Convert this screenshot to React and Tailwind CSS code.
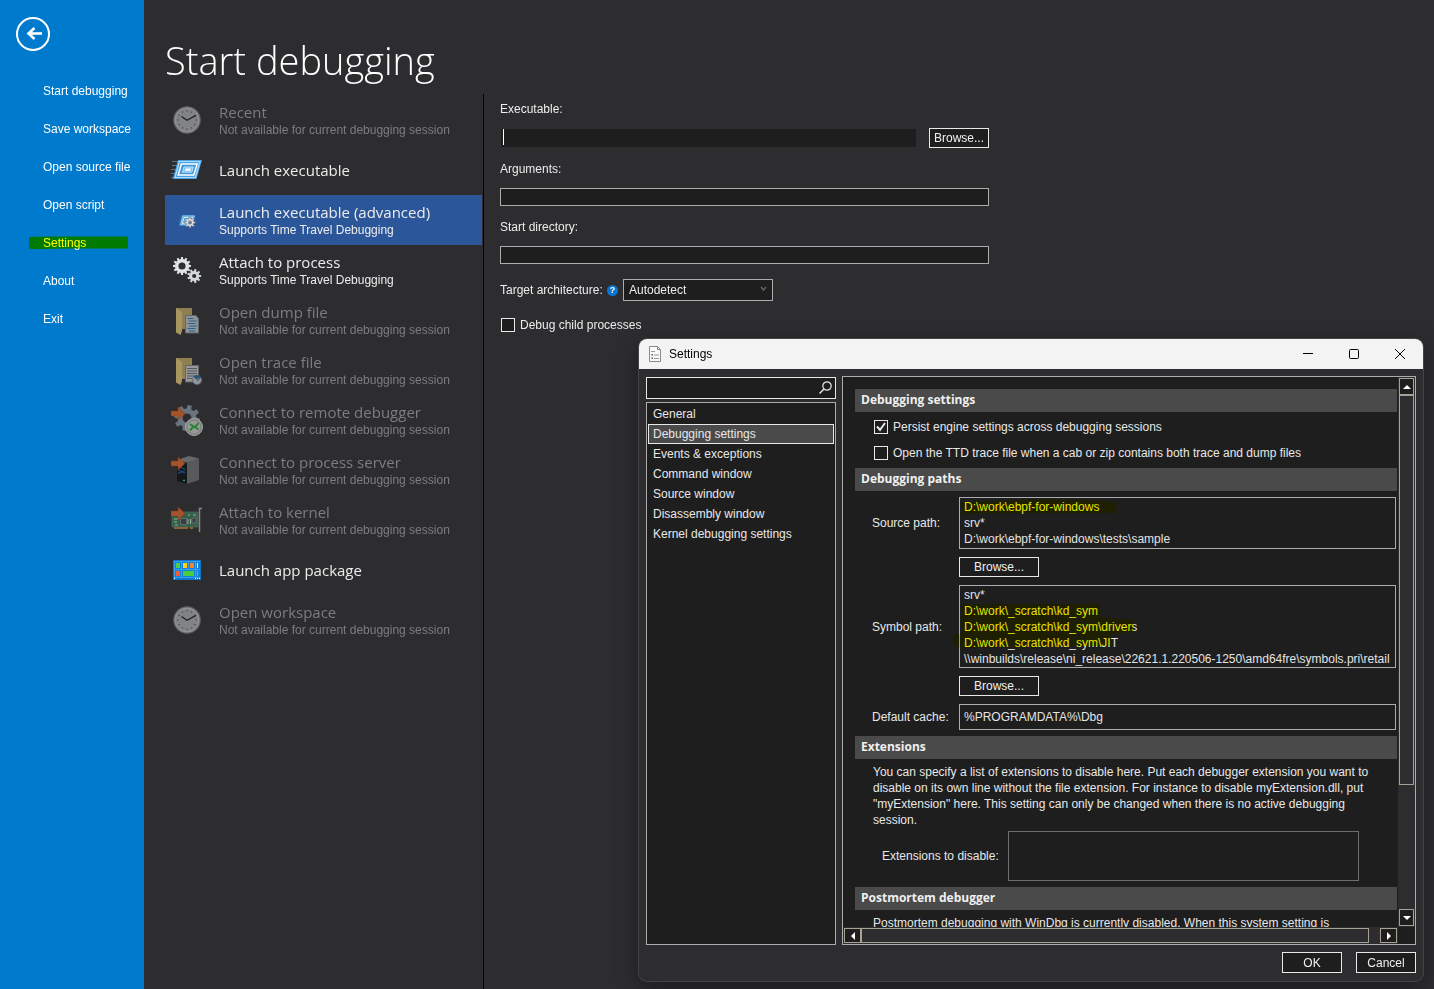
import { useState } from "react";

/* ---------- icons ---------- */

function gearPath(cx, cy, teeth, outer, inner) {
  const pts = [];
  const step = (Math.PI * 2) / teeth;
  for (let i = 0; i < teeth; i++) {
    const a = i * step;
    [
      [inner, -0.32],
      [outer, -0.2],
      [outer, 0.2],
      [inner, 0.32],
    ].forEach(([r, o]) => {
      const t = a + o * step;
      pts.push(`${(cx + r * Math.cos(t)).toFixed(2)} ${(cy + r * Math.sin(t)).toFixed(2)}`);
    });
  }
  return `M${pts.join("L")}Z`;
}

function ClockIcon() {
  const ticks = Array.from({ length: 12 }, (_, i) => i * 30);
  return (
    <svg width="32" height="32" viewBox="0 0 32 32" aria-hidden="true">
      <circle cx="16" cy="16" r="13.2" fill="#7a7b7d" stroke="#606163" strokeWidth="1.2" />
      <circle cx="16" cy="16" r="12" fill="#828385" stroke="#9a9b9d" strokeWidth="0.8" />
      {ticks.map((t) => (
        <path key={t} d="M16 6v1.8" stroke="#4d4e50" strokeWidth="0.9" transform={`rotate(${t} 16 16)`} />
      ))}
      <path d="M10.5 12.5L16 16.3L25 11.3" fill="none" stroke="#232325" strokeWidth="1.4" />
    </svg>
  );
}

function LaunchShape() {
  return (
    <>
      <path d="M1 7.500h6M1 11.500h5M0 15.500h5M0 19.500h4M0 23.500h3" stroke="#5d7385" strokeWidth="1.2" />
      <path d="M7 6h24l-5.5 19H1.8Z" fill="#4ba3e3" />
      <path d="M8.3 7.5h20.8l-4.7 16H4Z" fill="none" stroke="#a9dbff" strokeWidth="1.2" />
      <path d="M10.4 10h15.8l-3.4 11H7.2Z" fill="#3f97dc" stroke="#fff" strokeWidth="1.5" />
      <path d="M13 13h9.4l-1.6 5.2h-9.4Z" fill="#79c2f5" stroke="#d6efff" strokeWidth="0.8" />
      <path d="M14.6 14.4h5.4l-.8 2.4h-5.3Z" fill="#fff" />
    </>
  );
}

function LaunchIcon() {
  return (
    <svg width="32" height="32" viewBox="0 0 32 32" aria-hidden="true">
      <LaunchShape />
    </svg>
  );
}

function LaunchAdvancedIcon() {
  return (
    <svg width="32" height="32" viewBox="0 0 32 32" aria-hidden="true">
      <g transform="translate(7.5 8) scale(0.54)">
        <LaunchShape />
      </g>
      <path d={gearPath(19, 18.5, 8, 5.4, 3.8)} fill="#dcdee0" stroke="#5b646e" strokeWidth="0.6" />
      <circle cx="19" cy="18.500" r="1.6" fill="#6a86a4" stroke="#5b646e" strokeWidth="0.6" />
    </svg>
  );
}

function GearsIcon() {
  return (
    <svg width="32" height="32" viewBox="0 0 32 32" aria-hidden="true">
      <path d={gearPath(11, 12, 12, 9, 7)} fill="#dfe3e6" />
      <circle cx="11" cy="12" r="3.6" fill="#2d2d30" />
      <path d={gearPath(23.2, 22, 9, 7, 5)} fill="#d3d7da" />
      <circle cx="23.2" cy="22" r="2.1" fill="#2d2d30" />
    </svg>
  );
}

function FolderShape() {
  return (
    <>
      <path d="M5 4h16v21H8Z" fill="#8f7f52" />
      <path d="M5 4l6 4v19l-1.500 4L5 28.500Z" fill="#a8965f" />
    </>
  );
}

function DumpIcon() {
  return (
    <svg width="32" height="32" viewBox="0 0 32 32" aria-hidden="true">
      <FolderShape />
      <path d="M14.500 11.500H25l2.500 3V29h-13Z" fill="#909498" stroke="#616468" />
      <path d="M16.500 14.500h6M18 17h8M16.500 19.500h8M18 22h8M16.500 24.500h8M18 27h6" stroke="#2a6390" strokeWidth="1.1" />
    </svg>
  );
}

function TraceIcon() {
  return (
    <svg width="32" height="32" viewBox="0 0 32 32" aria-hidden="true">
      <FolderShape />
      <path d="M14.500 11.500h13V28h-13Z" fill="#96989a" stroke="#616468" />
      <path d="M16 14.500h10M16 17h10M16 19.500h10M16 22h8M16 24.500h5" stroke="#55585b" strokeWidth="1" />
      <circle cx="26" cy="26" r="4.600" fill="#8f969b" stroke="#5f6468" strokeWidth="0.8" />
      <path d="M22.500 23c1-2.500 5.500-3 7.500.5l-1.500 2l-1.500-2l-2 1.500Z" fill="#24587f" />
      <path d="M26 26v-2.500M26 26h2" stroke="#3a3d40" strokeWidth="0.9" />
    </svg>
  );
}

function ArrowShape() {
  return <path d="M0 7h7V3l7 6.500L7 16v-4H0Z" fill="#a4532a" stroke="#7f3f20" strokeWidth="0.5" />;
}

function RemoteIcon() {
  return (
    <svg width="32" height="32" viewBox="0 0 32 32" aria-hidden="true">
      <path d={gearPath(16, 14, 8, 13, 9.5)} fill="#6a7480" transform="rotate(12 16 14)" />
      <circle cx="16" cy="14" r="4.500" fill="#2d2d30" />
      <ArrowShape />
      <circle cx="23" cy="23" r="8.500" fill="#8b8e8b" stroke="#a3a5a3" strokeWidth="1" />
      <circle cx="23" cy="23" r="7" fill="#959895" stroke="#6b6e6b" strokeWidth="0.6" />
      <path d="M19 20l3.500 2.500l-3.500 4M27.500 19l-3.500 4l3.500 2.500" fill="none" stroke="#2a8236" strokeWidth="2" />
    </svg>
  );
}

function ServerIcon() {
  return (
    <svg width="32" height="32" viewBox="0 0 32 32" aria-hidden="true">
      <path d="M6 6l12-4l10 2.500l-12 4.500Z" fill="#66686b" />
      <path d="M6 6l10 3v21l-10-3Z" fill="#151719" />
      <path d="M16 9l12-4.500V26l-12 4Z" fill="#57595d" />
      <path d="M7 16l7 3M7 19.500l7-3M8 13l6 2" stroke="#1d4f86" strokeWidth="1.100" />
      <path d="M12 26.500h2" stroke="#2f9aa0" strokeWidth="1.500" />
      <ArrowShape />
    </svg>
  );
}

function KernelIcon() {
  return (
    <svg width="32" height="32" viewBox="0 0 32 32" aria-hidden="true">
      <path d="M1 8h26v15H1Z" fill="#355f49" stroke="#4d7a62" strokeWidth="0.6" />
      <path d="M3 23h14v2H3ZM19 23h3v2h-3Z" fill="#8a6336" />
      <path d="M9.500 14.500h6v6h-6ZM21 14h4v5h-4Z" fill="#3b3e40" stroke="#86898b" strokeWidth="0.500" />
      <path d="M3 15h4M3 18h3M4 21h3M17 11h2M22 11h3M17 15v5M19.500 15v5" stroke="#9db5a5" strokeWidth="0.900" />
      <path d="M31 4.500h-2.500V28" fill="none" stroke="#85888a" strokeWidth="1.500" />
      <ArrowShape />
    </svg>
  );
}

function PackageIcon() {
  return (
    <svg width="32" height="32" viewBox="0 0 32 32" shapeRendering="crispEdges" aria-hidden="true">
      <path d="M2 6h28v20H2Z" fill="#1075c8" />
      <path d="M3 7h26v17H3Z" fill="#36a0f5" />
      <path d="M4 8h6v7H4ZM11 8h6v7h-6ZM18 8h6v7h-6ZM25 8h4v7h-4ZM4 16h6v7H4ZM11 16h13v7H11ZM25 16h4v7h-4Z" fill="#1180d8" />
      <path d="M5 9h4v5H5Z" fill="#4fd04a" />
      <path d="M12 9h4v5h-4Z" fill="#ffd21c" />
      <path d="M19 9h4v5h-4Z" fill="#f5832a" />
      <path d="M26 9h1v5h-1Z" fill="#d7eeff" />
      <path d="M5 17h4v5H5Z" fill="#f25f3a" />
      <path d="M12 17h11v5H12Z" fill="#4ccb3f" />
      <path d="M26 17h1v5h-1Z" fill="#f5832a" />
      <path d="M3 24h1v1H3ZM24 24h1v1h-1ZM26 24h1v1h-1ZM28 24h1v1h-1Z" fill="#fff" />
    </svg>
  );
}

/* ---------- data ---------- */

const NAV = ["Start debugging", "Save workspace", "Open source file", "Open script", "Settings", "About", "Exit"];

const NA = "Not available for current debugging session";
const TTD = "Supports Time Travel Debugging";

const TARGETS = [
  { title: "Recent", note: NA, Icon: ClockIcon, off: true },
  { title: "Launch executable", Icon: LaunchIcon },
  { title: "Launch executable (advanced)", note: TTD, Icon: LaunchAdvancedIcon, active: true },
  { title: "Attach to process", note: TTD, Icon: GearsIcon },
  { title: "Open dump file", note: NA, Icon: DumpIcon, off: true },
  { title: "Open trace file", note: NA, Icon: TraceIcon, off: true },
  { title: "Connect to remote debugger", note: NA, Icon: RemoteIcon, off: true },
  { title: "Connect to process server", note: NA, Icon: ServerIcon, off: true },
  { title: "Attach to kernel", note: NA, Icon: KernelIcon, off: true },
  { title: "Launch app package", Icon: PackageIcon },
  { title: "Open workspace", note: NA, Icon: ClockIcon, off: true },
];

const CATEGORIES = [
  "General",
  "Debugging settings",
  "Events & exceptions",
  "Command window",
  "Source window",
  "Disassembly window",
  "Kernel debugging settings",
];

/* ---------- shared controls ---------- */

const HEADING_FONT = "font-['Open_Sans','Noto_Sans',sans-serif]";
const FIELD = "block w-full rounded-none border border-[#acacac] bg-[#1e1e1e] px-1 text-[#e4e4e4] outline-none";
const BUTTON = "flex items-center justify-center border border-[#e8e8e8] bg-[#1e1e1e] text-[#f0f0f0]";

function Check({ id, label, checked, onChange }) {
  return (
    <div className="flex h-4 items-center">
      <span className="relative flex">
        <input
          id={id}
          type="checkbox"
          checked={checked}
          onChange={onChange}
          className="size-3.5 appearance-none border border-[#e8e8e8] bg-[#1e1e1e]"
        />
        {checked && (
          <svg className="pointer-events-none absolute inset-0" width="14" height="14" viewBox="0 0 14 14" aria-hidden="true">
            <path d="M3 6.500L6 10L11 3" fill="none" stroke="#ececec" strokeWidth="2" />
          </svg>
        )}
      </span>
      <label htmlFor={id} className="pl-[5px] whitespace-nowrap">
        {label}
      </label>
    </div>
  );
}

function SectionTitle({ children }) {
  return (
    <h3 className={`h-[23px] bg-[#4a4a4a] pl-1.5 leading-[22px] font-bold text-[#f0f0f0] ${HEADING_FONT}`}>{children}</h3>
  );
}

function Triangle({ d }) {
  return (
    <svg width="8" height="8" viewBox="0 0 8 8" aria-hidden="true">
      <path d={d} fill="#fff" />
    </svg>
  );
}

const SCROLL_BUTTON = "flex shrink-0 items-center justify-center border border-[#a8a294] bg-[#1e1e1e]";

/* ---------- page parts ---------- */

function Sidebar() {
  return (
    <aside className="w-36 shrink-0 bg-[#007acc] text-white">
      <button type="button" aria-label="Back" className="mt-[17px] ml-4 block size-[34px]">
        <svg width="34" height="34" viewBox="0 0 34 34" fill="none" stroke="#fff" aria-hidden="true">
          <circle cx="17" cy="17" r="16" strokeWidth="2" />
          <path d="M12 16.500h14" strokeWidth="2.600" />
          <path d="M18.500 11L12.500 16.500L18.500 22" strokeWidth="2.600" />
        </svg>
      </button>
      <nav className="mt-[21px] flex flex-col">
        {NAV.map((item) => (
          <a key={item} href="#" className="relative flex h-[38px] items-center pl-[43px] whitespace-nowrap">
            {item}
            {item === "Settings" && (
              <svg
                className="absolute top-3 left-[29px] mix-blend-multiply"
                width="99"
                height="13"
                viewBox="0 0 99 13"
                aria-hidden="true"
              >
                <path d="M0 1L20 .5H99V12.500H40L12 13H0Z" fill="#ff0" />
              </svg>
            )}
          </a>
        ))}
      </nav>
    </aside>
  );
}

function TargetList() {
  return (
    <ul className="w-[318px] shrink-0 pt-px pr-px">
      {TARGETS.map(({ title, note, Icon, off, active }) => (
        <li key={title}>
          <button
            type="button"
            disabled={off}
            className={`flex h-[50px] w-full items-center text-left ${active ? "bg-[#2b579a]" : ""} ${
              off ? "text-[#7d7d7f]" : "text-[#ececec]"
            }`}
          >
            <span className="flex w-[54px] shrink-0 pl-1.5">
              <Icon />
            </span>
            <span className="flex flex-col whitespace-nowrap">
              <span className={`text-[15px] leading-5 ${HEADING_FONT}`}>{title}</span>
              {note && <span>{note}</span>}
            </span>
          </button>
        </li>
      ))}
    </ul>
  );
}

function LaunchForm() {
  const [child, setChild] = useState(false);
  return (
    <form className="ml-4 w-full max-w-[489px] pt-[7px] text-[#ececec]" onSubmit={(e) => e.preventDefault()}>
      <label htmlFor="exe" className="block">
        Executable:
      </label>
      <div className="mt-[11px] flex items-center gap-[13px]">
        <div className="relative flex flex-1 pl-px">
          <input
            id="exe"
            className="block h-[18px] w-full bg-[#1e1e1e] px-0.5 text-[#f0f0f0] caret-transparent outline-none"
          />
          <span className="pointer-events-none absolute top-0 left-[3px] h-4 w-px bg-white" />
        </div>
        <button type="button" className={`${BUTTON} h-5 w-[60px]`}>
          Browse...
        </button>
      </div>
      <label htmlFor="args" className="mt-[13px] block">
        Arguments:
      </label>
      <input id="args" className={`${FIELD} mt-[11px] h-[18px]`} />
      <label htmlFor="dir" className="mt-[13px] block">
        Start directory:
      </label>
      <input id="dir" className={`${FIELD} mt-[11px] h-[18px]`} />
      <div className="mt-[15px] flex items-center">
        <label htmlFor="arch" className="w-[107px] whitespace-nowrap">
          Target architecture:
        </label>
        <span className="flex size-[11px] items-center justify-center rounded-full bg-[#0a74d0] text-[9px] leading-none font-bold text-white">
          ?
        </span>
        <div className="relative ml-[5px]">
          <select
            id="arch"
            defaultValue="Autodetect"
            className="block h-[22px] w-[150px] appearance-none border border-[#acacac] bg-[#1e1e1e] px-[5px] text-[#ececec]"
          >
            <option>Autodetect</option>
          </select>
          <svg className="pointer-events-none absolute top-1.5 right-1.5" width="7" height="7" viewBox="0 0 7 7" aria-hidden="true">
            <path d="M1 2l2.500 3L6 2" fill="none" stroke="#6b6b6b" strokeWidth="1.200" />
          </svg>
        </div>
      </div>
      <div className="mt-4 pl-px">
        <Check id="child" label="Debug child processes" checked={child} onChange={() => setChild(!child)} />
      </div>
    </form>
  );
}

function TitleBar() {
  return (
    <header className="flex h-[30px] items-center bg-[#f3f3f3] pl-2.5 text-black">
      <svg width="12" height="16" viewBox="0 0 12 16" fill="none" aria-hidden="true">
        <path d="M.5 .5h8l3 3v12H.5Z" fill="#fafafa" stroke="#8a8a8a" />
        <path d="M8.500 .5v3h3" stroke="#8a8a8a" />
        <path d="M2 5.500h4M5 9h5M5 12.500h5" stroke="#9a9a9a" />
        <path d="M2.500 8h1.500v1.500H2.500ZM2.500 11.500h1.500V13H2.500Z" fill="#555" />
      </svg>
      <h2 className="flex-1 pl-2">Settings</h2>
      <button type="button" aria-label="Minimize" className="flex h-[30px] w-[46px] items-center justify-center">
        <svg width="10" height="10" viewBox="0 0 10 10" stroke="#000" fill="none" aria-hidden="true">
          <path d="M0 4.500h10" />
        </svg>
      </button>
      <button type="button" aria-label="Maximize" className="flex h-[30px] w-[46px] items-center justify-center">
        <svg width="10" height="10" viewBox="0 0 10 10" stroke="#000" fill="none" aria-hidden="true">
          <rect x=".5" y=".5" width="9" height="9" rx="1" />
        </svg>
      </button>
      <button type="button" aria-label="Close" className="flex h-[30px] w-[46px] items-center justify-center">
        <svg width="10" height="10" viewBox="0 0 10 10" stroke="#000" fill="none" aria-hidden="true">
          <path d="M0 0l10 10M10 0L0 10" />
        </svg>
      </button>
    </header>
  );
}

function SettingsContent() {
  const [persist, setPersist] = useState(true);
  const [openTtd, setOpenTtd] = useState(false);
  return (
    <div className="h-[550px] min-w-0 flex-1 overflow-hidden pt-3 pr-px pl-3">
      <SectionTitle>Debugging settings</SectionTitle>
      <div className="flex flex-col gap-2.5 pt-[7px] pb-[7px] pl-[19px]">
        <Check
          id="persist"
          label="Persist engine settings across debugging sessions"
          checked={persist}
          onChange={() => setPersist(!persist)}
        />
        <Check
          id="ttd"
          label="Open the TTD trace file when a cab or zip contains both trace and dump files"
          checked={openTtd}
          onChange={() => setOpenTtd(!openTtd)}
        />
      </div>
      <SectionTitle>Debugging paths</SectionTitle>
      <div className="grid grid-cols-[87px_1fr] items-center gap-y-2 pt-1.5 pr-px pb-1.5 pl-[17px]">
        <label htmlFor="src">Source path:</label>
        <div className="relative">
          <textarea
            id="src"
            rows={3}
            wrap="off"
            className={`${FIELD} h-[52px] resize-none overflow-hidden py-px`}
            defaultValue={"D:\\work\\ebpf-for-windows\nsrv*\nD:\\work\\ebpf-for-windows\\tests\\sample"}
          />
          <svg className="pointer-events-none absolute top-0.5 left-0.5 mix-blend-multiply" width="156" height="16" viewBox="0 0 156 16" aria-hidden="true">
            <path d="M0 3L50 1.500L80 0L120 1L155 3V14H80L20 14.500H0Z" fill="#ff0" />
          </svg>
        </div>
        <button type="button" className={`${BUTTON} col-start-2 h-5 w-20`}>
          Browse...
        </button>
        <label htmlFor="sym">Symbol path:</label>
        <div className="relative">
          <textarea
            id="sym"
            rows={5}
            wrap="off"
            className={`${FIELD} h-[83px] resize-none overflow-hidden py-px`}
            defaultValue={
              "srv*\nD:\\work\\_scratch\\kd_sym\nD:\\work\\_scratch\\kd_sym\\drivers\nD:\\work\\_scratch\\kd_sym\\JIT\n\\\\winbuilds\\release\\ni_release\\22621.1.220506-1250\\amd64fre\\symbols.pri\\retail"
            }
          />
          <svg className="pointer-events-none absolute top-[18px] -left-1.5 mix-blend-multiply" width="184" height="48" viewBox="0 0 184 48" aria-hidden="true">
            <path d="M8 1H147V14L180 17V29L158 31V43L8 45L0 43V31H8Z" fill="#ff0" />
          </svg>
        </div>
        <button type="button" className={`${BUTTON} col-start-2 h-5 w-20`}>
          Browse...
        </button>
        <label htmlFor="cache">Default cache:</label>
        <input id="cache" className={`${FIELD} h-[26px]`} defaultValue="%PROGRAMDATA%\Dbg" />
      </div>
      <SectionTitle>Extensions</SectionTitle>
      <p className="max-w-[518px] pt-[5px] pl-[18px]">
        You can specify a list of extensions to disable here. Put each debugger extension you want to disable on its own
        line without the file extension. For instance to disable myExtension.dll, put "myExtension" here. This setting can
        only be changed when there is no active debugging session.
      </p>
      <div className="flex items-center pt-[3px] pr-[38px] pb-1.5 pl-[27px]">
        <label htmlFor="ext" className="w-[126px] shrink-0 whitespace-nowrap">
          Extensions to disable:
        </label>
        <textarea
          id="ext"
          disabled
          className="block h-[50px] flex-1 resize-none border border-[#6e6e6e] bg-[#1e1e1e]"
        />
      </div>
      <SectionTitle>Postmortem debugger</SectionTitle>
      <p className="pt-[5px] pl-[18px] whitespace-nowrap">
        Postmortem debugging with WinDbg is currently disabled. When this system setting is
      </p>
    </div>
  );
}

function SettingsPanel() {
  return (
    <section className="min-w-0 flex-1 border border-[#acacac] bg-[#1e1e1e] text-[#e8e8e8]">
      <div className="flex">
        <SettingsContent />
        <div className="flex w-[17px] flex-col bg-[#2d2d30] p-px">
          <button type="button" aria-label="Scroll up" className={`${SCROLL_BUTTON} h-[17px]`}>
            <Triangle d="M0 6L4 2L8 6Z" />
          </button>
          <div className="h-[390px] border border-[#a8a294]" />
          <button type="button" aria-label="Scroll down" className={`${SCROLL_BUTTON} mt-auto h-[17px]`}>
            <Triangle d="M0 2L4 6L8 2Z" />
          </button>
        </div>
      </div>
      <div className="mr-[17px] flex h-[17px] bg-[#2d2d30] p-px">
        <button type="button" aria-label="Scroll left" className={`${SCROLL_BUTTON} w-[17px]`}>
          <Triangle d="M6 0L2 4L6 8Z" />
        </button>
        <div className="w-[508px] border border-[#a8a294]" />
        <button type="button" aria-label="Scroll right" className={`${SCROLL_BUTTON} ml-auto w-[17px]`}>
          <Triangle d="M2 0L6 4L2 8Z" />
        </button>
      </div>
    </section>
  );
}

function SettingsDialog() {
  return (
    <div
      role="dialog"
      aria-label="Settings"
      className="absolute top-[339px] left-[639px] w-[784px] overflow-hidden rounded-lg bg-[#2d2d30] shadow-[0_8px_24px_rgba(0,0,0,0.4)] ring-1 ring-[#444446]"
    >
      <TitleBar />
      <div className="flex gap-1.5 px-[7px] pt-[7px]">
        <div className="flex w-[190px] shrink-0 flex-col gap-[3px] pt-px">
          <div className="relative">
            <input
              type="text"
              aria-label="Search settings"
              className="block h-[22px] w-full border border-[#e8e8e8] bg-[#1e1e1e] pr-6 pl-1 text-[#e8e8e8] outline-none"
            />
            <svg className="pointer-events-none absolute top-1 right-1" width="13" height="13" viewBox="0 0 13 13" fill="none" stroke="#e8e8e8" aria-hidden="true">
              <circle cx="8" cy="5" r="4.200" strokeWidth="1.200" />
              <path d="M5 8L.5 12.500" strokeWidth="1.400" />
            </svg>
          </div>
          <ul className="flex-1 border border-[#acacac] bg-[#1e1e1e] px-px pt-px text-[#e8e8e8]">
            {CATEGORIES.map((c) => (
              <li key={c}>
                <button
                  type="button"
                  className={`block h-5 w-full border px-1 text-left leading-[18px] ${
                    c === "Debugging settings" ? "border-[#e8e8e8] bg-[#4a4a4a]" : "border-transparent"
                  }`}
                >
                  {c}
                </button>
              </li>
            ))}
          </ul>
        </div>
        <SettingsPanel />
      </div>
      <div className="flex justify-end gap-3.5 px-[7px] pt-[7px] pb-2">
        <button type="button" className={`${BUTTON} h-[21px] w-[60px]`}>
          OK
        </button>
        <button type="button" className={`${BUTTON} h-[21px] w-[60px]`}>
          Cancel
        </button>
      </div>
    </div>
  );
}

export default function App() {
  return (
    <div className="relative flex min-h-screen overflow-hidden bg-[#2d2d30] font-['Liberation_Sans',Arial,sans-serif] text-xs">
      <Sidebar />
      <main className="flex flex-1 flex-col pl-[21px]">
        <h1 className={`h-[94px] pt-8 text-[38px] leading-[56px] font-light whitespace-nowrap text-white ${HEADING_FONT}`}>
          Start debugging
        </h1>
        <div className="flex flex-1">
          <TargetList />
          <div className="w-px shrink-0 bg-black" />
          <LaunchForm />
        </div>
      </main>
      <SettingsDialog />
    </div>
  );
}
